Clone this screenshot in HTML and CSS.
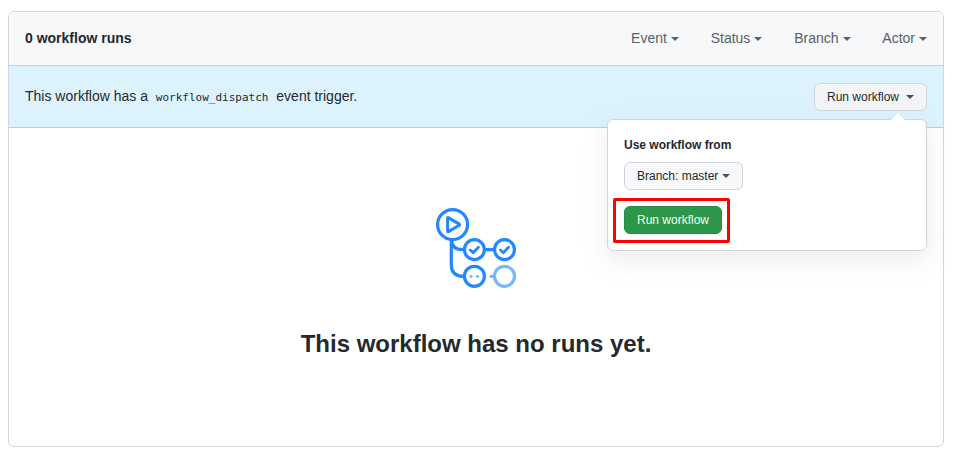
FILE: index.html
```html
<!DOCTYPE html>
<html lang="en">
<head>
<meta charset="utf-8">
<title>Workflow runs</title>
<link rel="stylesheet" href="styles.css">
</head>
<body>
<main class="box">
  <header class="box-header">
    <strong>0 workflow runs</strong>
    <nav class="filters">
      <span class="filter">Event<i class="caret"></i></span>
      <span class="filter">Status<i class="caret"></i></span>
      <span class="filter">Branch<i class="caret"></i></span>
      <span class="filter">Actor<i class="caret"></i></span>
    </nav>
  </header>
  <section class="dispatch">
    <p class="dispatch-text">This workflow has a <code>workflow_dispatch</code> event trigger.</p>
    <div class="dropdown">
      <button class="btn">Run workflow <i class="caret caret-wide"></i></button>
      <div class="popover">
        <div class="popover-title">Use workflow from</div>
        <button class="btn branch">Branch: master<i class="caret"></i></button>
        <div class="submit">
          <button class="btn btn-primary">Run workflow</button>
          <span class="highlight"></span>
        </div>
      </div>
    </div>
  </section>
  <section class="blankslate">
    <svg class="actions-icon" width="82" height="82" viewBox="435 207 82 82" fill="none" stroke="#2188ff" stroke-width="3.2" stroke-linecap="round" stroke-linejoin="round">
      <circle cx="452.6" cy="224.6" r="15"/>
      <path d="M447.600 218v13.200q0 .8.7.4l11-6.400q.7-.6 0-1.100l-11-6.500q-.7-.4-.7.400z" stroke-width="3"/>
      <path d="M451.300 240v24.500q0 11.800 11.800 11.800M451.300 240q1 9.600 10.800 9.600M485.500 249.600h8"/>
      <circle cx="474.400" cy="249.600" r="10"/>
      <circle cx="504.500" cy="249.600" r="10"/>
      <path d="M470.300 250l2.900 2.700 5.200-5.500M500.400 250l2.900 2.700 5.200-5.500" stroke-width="2.800"/>
      <circle cx="474.400" cy="276.300" r="10"/>
      <g stroke="#79b8ff">
        <circle cx="504.500" cy="276.300" r="10"/>
        <path d="M491 276.300h3"/>
      </g>
      <g fill="#79b8ff" stroke="none">
        <circle cx="471" cy="276.300" r="1.600"/>
        <circle cx="477.500" cy="276.300" r="1.600"/>
      </g>
    </svg>
    <h1>This workflow has no runs yet.</h1>
  </section>
</main>
</body>
</html>
```
FILE: styles.css
```css
* {
  box-sizing: border-box;
}

body {
  margin: 0;
  padding: 11px 9px 9px 8px;
  background: #fff;
  color: #24292e;
  font: 14px/21px "Liberation Sans", Arial, sans-serif;
}

.box {
  height: 436px;
  border: 1px solid #d1d5de;
  border-radius: 6px;
}

.box-header {
  display: flex;
  align-items: center;
  justify-content: space-between;
  height: 53px;
  padding: 0 16px;
  background: #f6f8fa;
  border-radius: 5px 5px 0 0;
}

.filters {
  display: flex;
  gap: 31.8px;
}

.filter {
  display: flex;
  align-items: center;
  gap: 4px;
  color: #586069;
}

.caret {
  display: inline-block;
  width: 8px;
  height: 4px;
  border: 4px solid transparent;
  border-top-color: currentColor;
  border-bottom: 0;
  vertical-align: middle;
}

.btn .caret {
  color: #4b5056;
}

.dispatch {
  display: flex;
  align-items: center;
  justify-content: space-between;
  height: 63px;
  padding: 0 16px;
  background: #dcf3fe;
  border: solid #a8d4f8;
  border-width: 1px 0;
}

.dispatch-text {
  margin: 0;
}

code {
  padding: 2px 4px;
  font: 11px "DejaVu Sans Mono", monospace;
}

.dropdown {
  position: relative;
  display: flex;
}

.btn {
  display: flex;
  align-items: center;
  gap: 4px;
  height: 28px;
  padding: 0 12px;
  border: 1px solid #d1d5da;
  border-radius: 6px;
  background: #f3f4f6;
  color: #24292e;
  font: 12px/20px "Liberation Sans", Arial, sans-serif;
}

.caret-wide {
  margin: 1px 0 0 3px;
}

.popover {
  position: absolute;
  z-index: 1;
  top: 36px;
  right: 0;
  width: 320px;
  height: 132px;
  padding: 16px;
  border: 1px solid #d1d5de;
  border-radius: 6px;
  background: #fff;
  box-shadow: 0 8px 24px rgba(149, 157, 165, .2);
}

.popover::before,
.popover::after {
  position: absolute;
  content: "";
  border: 8px solid transparent;
  border-top: 0;
}

.popover::before {
  top: -8px;
  right: 20px;
  border-bottom-color: #d1d5da55;
}

.popover::after {
  top: -7px;
  right: 21px;
  border-width: 7px;
  border-top: 0;
  border-bottom-color: #fff;
}

.popover-title {
  margin-bottom: 8px;
  font-size: 12px;
  font-weight: 700;
  line-height: 18px;
}

.branch {
  background: #f6f8fa;
  margin-bottom: 16px;
}

.submit {
  position: relative;
  width: max-content;
}

.btn-primary {
  background: #2c974b;
  border-color: #2a8a46;
  color: #f4fbf6;
}

.highlight {
  position: absolute;
  inset: -8px -8px -9px -11px;
  border: 3px solid #f00;
  border-radius: 2px;
}

.blankslate {
  display: flex;
  flex-direction: column;
  align-items: center;
  padding-top: 79px;
}

.actions-icon {
  display: block;
}

h1 {
  margin: 37px 0 0;
  font-size: 24px;
  line-height: 36px;
}
```
